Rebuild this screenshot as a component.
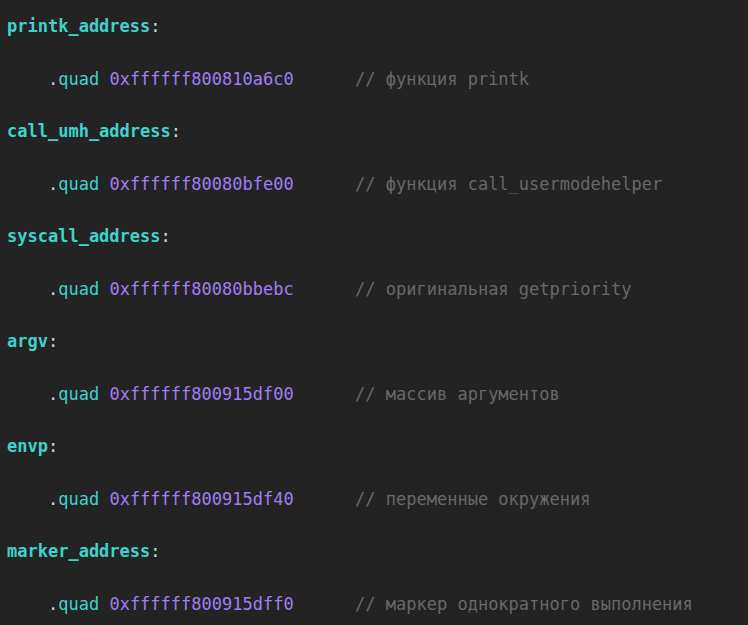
const rows = [
  { label: "printk_address", addr: "0xffffff800810a6c0", comment: "функция printk" },
  { label: "call_umh_address", addr: "0xffffff80080bfe00", comment: "функция call_usermodehelper" },
  { label: "syscall_address", addr: "0xffffff80080bbebc", comment: "оригинальная getpriority" },
  { label: "argv", addr: "0xffffff800915df00", comment: "массив аргументов" },
  { label: "envp", addr: "0xffffff800915df40", comment: "переменные окружения" },
  { label: "marker_address", addr: "0xffffff800915dff0", comment: "маркер однократного выполнения" },
];

export default function App() {
  return (
    <div className="h-[625px] w-[748px] overflow-hidden bg-[#232323] pl-[7px] text-[17px] leading-[52.5px]">
      <pre className="whitespace-pre font-['DejaVu_Sans_Mono',monospace]">
        {rows.map((r) => (
          <div key={r.label}>
            <div>
              <span className="font-semibold text-[#3fd3cb]">{r.label}</span>
              <span className="text-[#d4d4d4]">:</span>
            </div>
            <div>
              <span>    </span>
              <span className="text-[#d4d4d4]">.</span>
              <span className="text-[#3fd3cb]">quad</span>
              <span> </span>
              <span className="text-[#a07ef4]">{r.addr}</span>
              <span>      </span>
              <span className="text-[#686868]">// {r.comment}</span>
            </div>
          </div>
        ))}
      </pre>
    </div>
  );
}
